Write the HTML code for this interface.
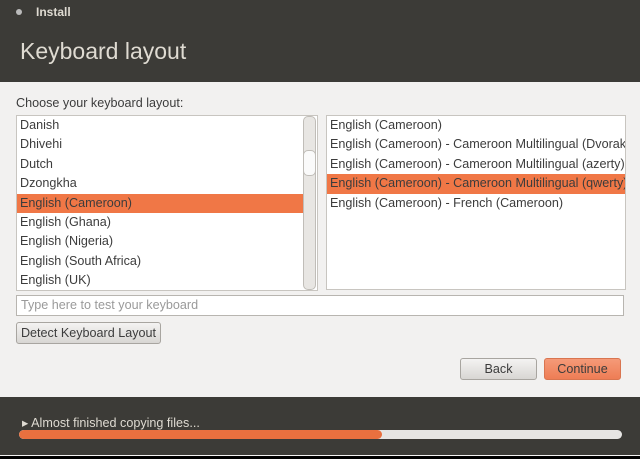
<!DOCTYPE html>
<html><head><style>
body{margin:0;width:640px;height:459px;overflow:hidden;background:#000;font-family:"Liberation Sans",sans-serif;font-size:12.6px;color:#3c3c3c}
.win{position:absolute;left:0;top:0;width:640px;height:456px;background:#f2f1f0}
.top{position:absolute;left:0;top:0;width:640px;height:82px;background:#3c3b37}
.tb{position:absolute;left:36px;top:5px;color:#dfdbd2;font-weight:bold;font-size:12px}
.dot{position:absolute;left:16px;top:9px;width:6px;height:6px;border-radius:50%;background:#bbb}
h1{position:absolute;left:20px;top:38px;margin:0;font-weight:normal;font-size:23px;color:#dfdbd2}
.lbl{position:absolute;left:16px;top:96px}
.list{position:absolute;background:#fff;border:1px solid #c8c5c0;overflow:hidden}
.row{height:19.4px;line-height:19.4px;padding-left:3px;white-space:nowrap}
.sel{background:#f07746;color:#3c3c3c}
.sb{position:absolute;left:303px;top:116px;width:11px;height:172px;border:1px solid #c0bdb8;border-radius:5px;background:#e8e6e3}
.th{position:absolute;left:303px;top:150px;width:11px;height:24px;border:1px solid #c0bdb8;border-radius:5px;background:#fafafa}
.inp{position:absolute;left:16px;top:295px;background:#fff;border:1px solid #b8b5b0;color:#9a9a9a;line-height:19px;padding-left:4px;box-sizing:border-box;width:608px;height:21px}
.btn{position:absolute;border:1px solid #a8a5a0;border-radius:3px;background:linear-gradient(#f4f3f2,#d8d6d3);text-align:center;box-sizing:border-box}
.bot{position:absolute;left:0;top:397px;width:640px;height:58px;background:#3c3b37}
.pt{position:absolute;left:22px;top:415px;color:#dfdbd2;font-size:12.6px}
.pb{position:absolute;left:19px;top:430px;width:603px;height:9px;border-radius:5px;background:#e6e5e3;overflow:hidden}
.pf{width:363px;height:9px;background:#e9703f;border-radius:5px}
</style></head><body>
<div class="win">
<div class="top"><div class="dot"></div><div class="tb">Install</div><h1>Keyboard layout</h1></div>
<div class="lbl">Choose your keyboard layout:</div>
<div class="list" style="left:16px;top:115px;width:300px;height:174px">
<div class="row">Danish</div><div class="row">Dhivehi</div><div class="row">Dutch</div><div class="row">Dzongkha</div>
<div class="row sel" style="width:284px">English (Cameroon)</div><div class="row">English (Ghana)</div><div class="row">English (Nigeria)</div><div class="row">English (South Africa)</div><div class="row">English (UK)</div></div>
<div class="sb"></div><div class="th"></div>
<div class="list" style="left:326px;top:115px;width:298px;height:173px">
<div class="row">English (Cameroon)</div><div class="row">English (Cameroon) - Cameroon Multilingual (Dvorak)</div><div class="row">English (Cameroon) - Cameroon Multilingual (azerty)</div>
<div class="row sel">English (Cameroon) - Cameroon Multilingual (qwerty)</div><div class="row">English (Cameroon) - French (Cameroon)</div></div>
<div class="inp">Type here to test your keyboard</div>
<div class="btn" style="left:16px;top:322px;width:145px;height:22px;line-height:20px">Detect Keyboard Layout</div>
<div class="btn" style="left:460px;top:358px;width:77px;height:22px;line-height:20px">Back</div>
<div class="btn" style="left:544px;top:358px;width:77px;height:22px;line-height:20px;background:linear-gradient(#f59a78,#ee7d55);border-color:#d97550">Continue</div>
<div class="bot"></div>
<div class="pt">▸ Almost finished copying files...</div>
<div class="pb"><div class="pf"></div></div>
</div>
</body></html>
